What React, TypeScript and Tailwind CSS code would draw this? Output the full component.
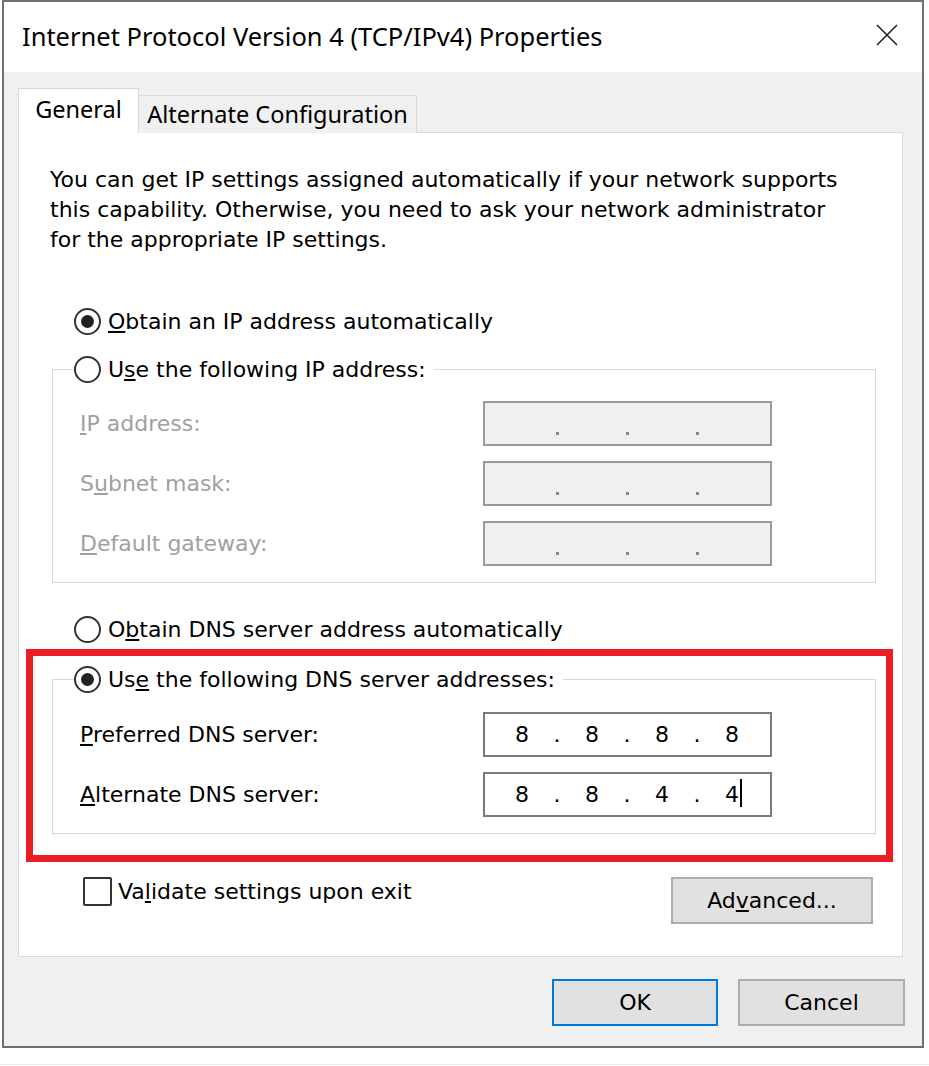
import React from 'react';

const bodyFont = "font-['DejaVu_Sans',sans-serif]";
const uiFont = "font-['Noto_Sans',sans-serif]";

const Radio: React.FC<{ checked?: boolean }> = ({ checked }) => (
  <span className="w-[27px] h-[27px] shrink-0 rounded-full border-2 border-[#333] bg-white flex items-center justify-center">
    {checked && <span className="w-[13px] h-[13px] rounded-full bg-[#222]"></span>}
  </span>
);

const IpField: React.FC<{ parts?: string[]; disabled?: boolean; caret?: boolean }> = ({ parts, disabled, caret }) => {
  const segs = parts || ['', '', '', ''];
  return (
    <div
      className={`w-[289px] h-[45px] border-2 flex items-center pl-[19px] ${
        disabled ? 'bg-[#f0f0f0] border-[#9a9a9a]' : 'bg-white border-[#7a7a7a]'
      }`}
    >
      {segs.map((s, i) => (
        <React.Fragment key={i}>
          <span className="w-[36px] text-center text-[22px] leading-none text-black">
            <span className="relative">
              {s}
              {caret && i === 3 && <span className="absolute left-full ml-[1px] -top-[3px] w-[2px] h-[28px] bg-black"></span>}
            </span>
          </span>
          {i < 3 && (
            <span className="w-[34px] text-center text-[22px] leading-none text-black">
              {disabled ? <span className="inline-block w-[3px] h-[3px] bg-[#7b86a8] translate-y-[4px]"></span> : '.'}
            </span>
          )}
        </React.Fragment>
      ))}
    </div>
  );
};

const FieldRow: React.FC<{ label: React.ReactNode; disabled?: boolean; children: React.ReactNode }> = ({ label, disabled, children }) => (
  <div className="flex items-center h-[45px]">
    <span className={`w-[403px] ${disabled ? 'text-[#a0a0a0]' : 'text-black'}`}>{label}</span>
    {children}
  </div>
);

const App: React.FC = () => {
  return (
    <div className={`w-[929px] h-[1066px] bg-white relative overflow-hidden ${bodyFont} text-[22px]`}>
      <div className="ml-[2px] w-[922px] h-[1048px] border-2 border-[#6f6f6f] bg-[#f0f0f0] flex flex-col">
        {/* title bar */}
        <div className="h-[70px] bg-white flex items-center justify-between pl-[18px] pr-[24px]">
          <span className={`${uiFont} text-[25.5px] text-black pb-[2px]`}>Internet Protocol Version 4 (TCP/IPv4) Properties</span>
          <svg width="22" height="22" viewBox="0 0 22 22" className="mb-[4px]">
            <path d="M1 1 L21 21 M21 1 L1 21" stroke="#222" strokeWidth="1.6" />
          </svg>
        </div>

        <div className="pl-[14px] pt-[16px]">
          {/* tabs */}
          <div className={`flex items-end h-[45px] -mb-px relative z-10 ${uiFont} text-[23.5px]`}>
            <div className="w-[121px] h-[45px] bg-white border border-b-0 border-[#d9d9d9] flex items-center justify-center pb-[2px]">
              General
            </div>
            <div className="w-[278px] h-[38px] bg-[#f0f0f0] border border-l-0 border-b-0 border-[#d9d9d9] flex items-center justify-center">
              Alternate Configuration
            </div>
          </div>

          {/* panel */}
          <div className="w-[885px] h-[825px] bg-white border border-[#d9d9d9] pt-[32px] text-black">
            <p className="pl-[31px] leading-[30px]">
              You can get IP settings assigned automatically if your network supports
              <br />
              this capability. Otherwise, you need to ask your network administrator
              <br />
              for the appropriate IP settings.
            </p>

            <div className="mt-[51px] ml-[55px] h-[30px] flex items-center gap-[7px]">
              <Radio checked />
              <span><u>O</u>btain an IP address automatically</span>
            </div>

            <fieldset className="mt-[18px] ml-[33px] w-[824px] border border-[#dadada] pl-[27px] pb-[16px]">
              <legend className="ml-[-6px] pr-[8px] h-[30px] flex items-center gap-[7px] bg-white">
                <Radio />
                <span>U<u>s</u>e the following IP address:</span>
              </legend>
              <div className="mt-[17px] flex flex-col gap-[15px]">
                <FieldRow label={<><u>I</u>P address:</>} disabled>
                  <IpField disabled />
                </FieldRow>
                <FieldRow label={<>S<u>u</u>bnet mask:</>} disabled>
                  <IpField disabled />
                </FieldRow>
                <FieldRow label={<><u>D</u>efault gateway:</>} disabled>
                  <IpField disabled />
                </FieldRow>
              </div>
            </fieldset>

            <div className="mt-[31px] ml-[55px] h-[30px] flex items-center gap-[7px]">
              <Radio />
              <span>O<u>b</u>tain DNS server address automatically</span>
            </div>

            <fieldset className="mt-[20px] ml-[33px] w-[824px] border border-[#dadada] pl-[27px] pb-[16px]">
              <legend className="ml-[-6px] pr-[8px] h-[30px] flex items-center gap-[7px] bg-white">
                <Radio checked />
                <span>Us<u>e</u> the following DNS server addresses:</span>
              </legend>
              <div className="mt-[18px] flex flex-col gap-[15px]">
                <FieldRow label={<><u>P</u>referred DNS server:</>}>
                  <IpField parts={['8', '8', '8', '8']} />
                </FieldRow>
                <FieldRow label={<><u>A</u>lternate DNS server:</>}>
                  <IpField parts={['8', '8', '4', '4']} caret />
                </FieldRow>
              </div>
            </fieldset>

            <div className="mt-[43px] pl-[64px] pr-[29px] flex items-start justify-between">
              <div className="flex items-center gap-[6px] h-[29px]">
                <span className="w-[29px] h-[29px] border-2 border-[#333] bg-white rounded-[2px]"></span>
                <span>Va<u>l</u>idate settings upon exit</span>
              </div>
              <button className="w-[202px] h-[47px] bg-[#e1e1e1] border-2 border-[#adadad] text-black">
                Ad<u>v</u>anced...
              </button>
            </div>
          </div>
        </div>

        {/* dialog buttons */}
        <div className="mt-[22px] flex justify-end gap-[20px] pr-[17px]">
          <button className="w-[166px] h-[47px] bg-[#e1e1e1] border-2 border-[#0078d7] text-black">OK</button>
          <button className="w-[167px] h-[47px] bg-[#e1e1e1] border-2 border-[#adadad] text-black">Cancel</button>
        </div>
      </div>
      <div className="mt-[16px] h-px bg-[#ececec]"></div>

      {/* red highlight annotation */}
      <div className="absolute left-[26px] top-[649px] w-[867px] h-[213px] border-[7px] border-[#ec1c24]"></div>
    </div>
  );
};

export default App;
